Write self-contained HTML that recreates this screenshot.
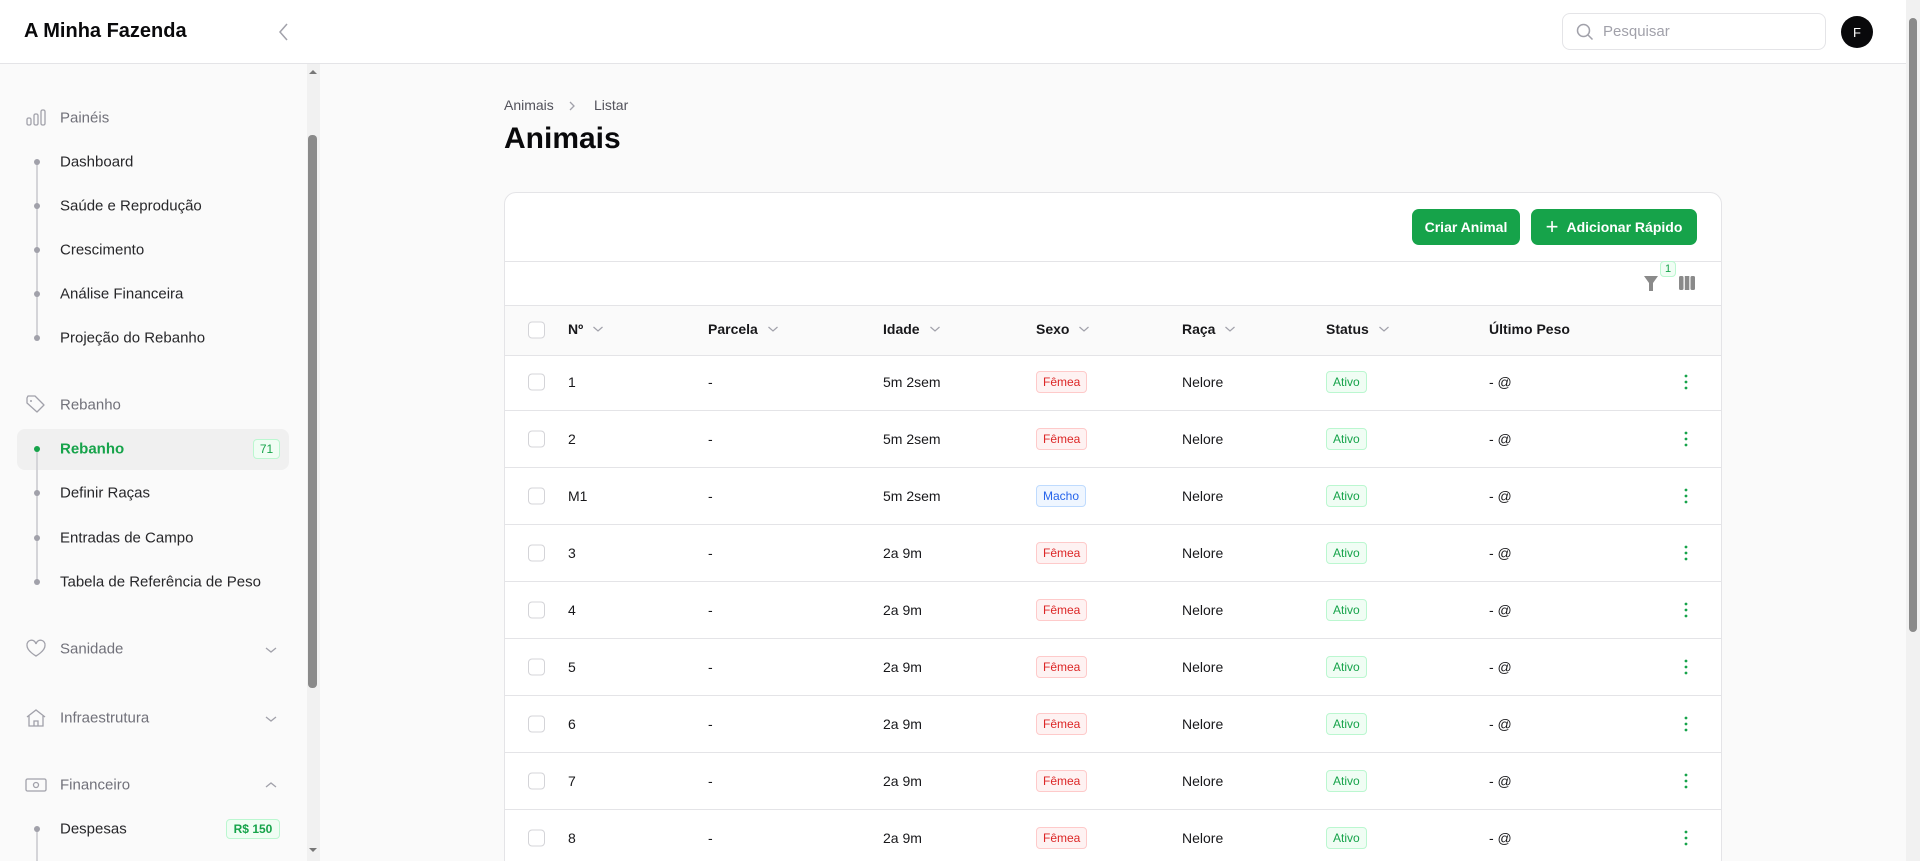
<!DOCTYPE html>
<html style="overflow:hidden;height:861px"><head><meta charset="utf-8"><style>
*{box-sizing:border-box;margin:0;padding:0}
html,body{overflow:hidden}
body{width:1920px;height:861px;background:#fafafa;font-family:"Liberation Sans",sans-serif;color:#18181b;position:relative}
.a{position:absolute}
.hdr{left:0;top:0;width:1906px;height:64px;background:#fff;border-bottom:1px solid #e4e4e7}
.side{left:0;top:64px;width:320px;height:797px;background:#fafafa}
.sec{position:absolute;left:60px;font-size:15px;color:#71717a;transform:translateY(-50%)}
.it{position:absolute;left:60px;font-size:15px;color:#27272a;transform:translateY(-50%)}
.dot{position:absolute;left:34px;width:6px;height:6px;border-radius:50%;background:#a1a1aa;transform:translateY(-50%)}
.vl{position:absolute;left:36px;width:1.5px;background:#d4d4d8}
.ico{position:absolute;left:25px;transform:translateY(-50%)}
.chev{position:absolute;left:264px;transform:translateY(-50%)}
.card{left:504px;top:192px;width:1218px;height:680px;background:#fff;border:1px solid #e4e4e7;border-radius:12px;overflow:hidden}
.btn{position:absolute;top:16px;height:36px;background:#16a34a;color:#fff;font-size:14px;font-weight:bold;border-radius:7px;display:flex;align-items:center;justify-content:center}
.th{position:absolute;font-size:14px;font-weight:bold;color:#18181b;top:329px;transform:translateY(-50%);display:flex;align-items:center;gap:9px}
.td{position:absolute;font-size:14px;color:#18181b;transform:translateY(-50%)}
.cb{position:absolute;left:528px;width:17px;height:17px;border:1px solid #d4d4d8;border-radius:4px;background:#fff;transform:translateY(-50%)}
.bd{position:absolute;font-size:12px;padding:3px 6px;border-radius:4px;border:1px solid;transform:translateY(-50%)}
.f{background:#fef2f2;border-color:#fecaca;color:#dc2626}
.m{background:#eff6ff;border-color:#bfdbfe;color:#2563eb}
.at{background:#f0fdf4;border-color:#bbf7d0;color:#16a34a}
.rl{position:absolute;left:504px;width:1218px;height:1px;background:#e4e4e7}
</style></head><body>
<div class="a hdr"></div>
<div class="a" style="left:24px;top:20px;font-size:20px;font-weight:bold;color:#09090b">A Minha Fazenda</div>
<svg class="a" style="left:276px;top:22px" width="16" height="20" viewBox="0 0 16 20"><path d="M11 2L4 10l7 8" stroke="#a1a1aa" stroke-width="1.5" fill="none"/></svg>
<div class="a" style="left:1562px;top:13px;width:264px;height:37px;border:1px solid #e4e4e7;border-radius:8px;background:#fff"></div>
<svg class="a" style="left:1575px;top:22px" width="20" height="20" viewBox="0 0 20 20"><circle cx="8.5" cy="8.5" r="6" stroke="#a1a1aa" stroke-width="1.5" fill="none"/><path d="M13 13l4.5 4.5" stroke="#a1a1aa" stroke-width="1.5"/></svg>
<div class="a" style="left:1603px;top:23px;font-size:15px;color:#a1a1aa">Pesquisar</div>
<div class="a" style="left:1841px;top:16px;width:32px;height:32px;border-radius:50%;background:#09090b;color:#fff;font-size:13px;display:flex;align-items:center;justify-content:center">F</div>
<div class="a" style="left:1906px;top:0;width:14px;height:861px;background:#f1f1f1"></div>
<div class="a" style="left:1909px;top:18px;width:8px;height:614px;border-radius:4px;background:#8a8a8a"></div>

<div class="a side"></div>
<div class="a" style="left:307px;top:64px;width:13px;height:797px;background:#f1f1f1"></div>
<div class="a" style="left:308px;top:135px;width:9px;height:553px;border-radius:4px;background:#8a8a8a"></div>
<svg class="a" style="left:308px;top:68px" width="10" height="8"><path d="M1 6h8L5 2z" fill="#777"/></svg>
<svg class="a" style="left:308px;top:846px" width="10" height="8"><path d="M1 2h8L5 6z" fill="#777"/></svg>

<svg class="ico" style="top:118px" width="22" height="20" viewBox="0 0 22 20"><g stroke="#a1a1aa" stroke-width="1.3" fill="none"><rect x="2" y="10" width="4" height="7" rx="1.5"/><rect x="9" y="6" width="4" height="11" rx="1.5"/><rect x="16" y="2" width="4" height="15" rx="1.5"/></g></svg>
<div class="sec" style="top:118px">Painéis</div>
<div class="vl" style="top:162px;height:176px"></div>
<div class="dot" style="top:162px"></div><div class="it" style="top:162px">Dashboard</div>
<div class="dot" style="top:206px"></div><div class="it" style="top:206px">Saúde e Reprodução</div>
<div class="dot" style="top:250px"></div><div class="it" style="top:250px">Crescimento</div>
<div class="dot" style="top:294px"></div><div class="it" style="top:294px">Análise Financeira</div>
<div class="dot" style="top:338px"></div><div class="it" style="top:338px">Projeção do Rebanho</div>

<svg class="ico" style="top:405px" width="22" height="20" viewBox="0 0 22 20"><path d="M2 3v5l10 9 7-7-9-9H3z" stroke="#a1a1aa" stroke-width="1.3" fill="none" stroke-linejoin="round"/><circle cx="6" cy="6" r="1" fill="#a1a1aa"/></svg>
<div class="sec" style="top:405px">Rebanho</div>
<div class="a" style="left:17px;top:429px;width:272px;height:41px;background:#f0f0f0;border-radius:8px"></div>
<div class="vl" style="top:449px;height:133px"></div>
<div class="dot" style="top:449px;background:#16a34a"></div><div class="it" style="top:449px;color:#16a34a;font-weight:bold">Rebanho</div>
<div class="a" style="left:253px;top:439px;width:27px;height:20px;border:1px solid #bbf7d0;background:#f0fdf4;border-radius:4px;color:#16a34a;font-size:12px;display:flex;align-items:center;justify-content:center">71</div>
<div class="dot" style="top:493px"></div><div class="it" style="top:493px">Definir Raças</div>
<div class="dot" style="top:538px"></div><div class="it" style="top:538px">Entradas de Campo</div>
<div class="dot" style="top:582px"></div><div class="it" style="top:582px">Tabela de Referência de Peso</div>

<svg class="ico" style="top:649px" width="22" height="20" viewBox="0 0 22 20"><path d="M11 17S2 12 2 6.5A4.5 4.5 0 0 1 11 5a4.5 4.5 0 0 1 9 1.5C20 12 11 17 11 17z" stroke="#a1a1aa" stroke-width="1.3" fill="none"/></svg>
<div class="sec" style="top:649px">Sanidade</div>
<svg class="chev" style="top:650px" width="14" height="10"><path d="M2 3l5 4 5-4" stroke="#a1a1aa" stroke-width="1.3" fill="none"/></svg>
<svg class="ico" style="top:718px" width="22" height="20" viewBox="0 0 22 20"><path d="M2 9l9-7 9 7M4 8v10h14V8M9 18v-5h4v5" stroke="#a1a1aa" stroke-width="1.3" fill="none"/></svg>
<div class="sec" style="top:718px">Infraestrutura</div>
<svg class="chev" style="top:719px" width="14" height="10"><path d="M2 3l5 4 5-4" stroke="#a1a1aa" stroke-width="1.3" fill="none"/></svg>
<svg class="ico" style="top:785px" width="22" height="20" viewBox="0 0 22 20"><rect x="1" y="4" width="20" height="12" rx="1.5" stroke="#a1a1aa" stroke-width="1.3" fill="none"/><circle cx="11" cy="10" r="2.5" stroke="#a1a1aa" stroke-width="1.3" fill="none"/></svg>
<div class="sec" style="top:785px">Financeiro</div>
<svg class="chev" style="top:785px" width="14" height="10"><path d="M2 7l5-4 5 4" stroke="#a1a1aa" stroke-width="1.3" fill="none"/></svg>
<div class="vl" style="top:829px;height:40px"></div>
<div class="dot" style="top:829px"></div><div class="it" style="top:829px">Despesas</div>
<div class="a" style="left:226px;top:819px;width:54px;height:20px;border:1px solid #bbf7d0;background:#f0fdf4;border-radius:4px;color:#16a34a;font-size:12px;font-weight:bold;display:flex;align-items:center;justify-content:center">R$ 150</div>

<div class="a" style="left:504px;top:97px;font-size:14px;color:#52525b">Animais</div>
<svg class="a" style="left:567px;top:100px" width="10" height="12"><path d="M3 2l4 4-4 4" stroke="#a1a1aa" stroke-width="1.3" fill="none"/></svg>
<div class="a" style="left:594px;top:97px;font-size:14px;color:#52525b">Listar</div>
<div class="a" style="left:504px;top:122px;font-size:30px;font-weight:bold;color:#09090b">Animais</div>

<div class="a card">
<div class="btn" style="left:907px;width:108px">Criar Animal</div>
<div class="btn" style="left:1026px;width:166px"><span style="font-size:22px;font-weight:normal;margin-right:8px;line-height:1">+</span>Adicionar Rápido</div>
<div class="a" style="left:0;top:68px;width:100%;height:1px;background:#e4e4e7"></div>
<div class="a" style="left:0;top:112px;width:100%;height:51px;background:#fafafa;border-top:1px solid #e4e4e7;border-bottom:1px solid #e4e4e7"></div>
</div>
<svg class="a" style="left:1643px;top:274px" width="16" height="18"><path d="M1 2h14l-5 7v8H6V9z" fill="#8a8a8a"/></svg>
<div class="a" style="left:1660px;top:261px;width:16px;height:16px;border-radius:4px;background:#f0fdf4;border:1px solid #bbf7d0;color:#16a34a;font-size:11px;display:flex;align-items:center;justify-content:center">1</div>
<svg class="a" style="left:1678px;top:275px" width="18" height="16"><rect x="1" y="1" width="4.5" height="14" rx="1.5" fill="#8a8a8a"/><rect x="6.8" y="1" width="4.5" height="14" fill="#8a8a8a"/><rect x="12.5" y="1" width="4.5" height="14" rx="1.5" fill="#8a8a8a"/></svg>

<div class="cb" style="top:330px"></div>
<div id="hd"></div>
<div id="rows"></div>
<script>
var cv='<svg width="12" height="8"><path d="M1.5 2l4.5 4 4.5-4" stroke="#a1a1aa" stroke-width="1.2" fill="none"/></svg>';
var hs=[["Nº",568,1],["Parcela",708,1],["Idade",883,1],["Sexo",1036,1],["Raça",1182,1],["Status",1326,1],["Último Peso",1489,0]];
var hh="";hs.forEach(function(c){hh+='<div class="th" style="left:'+c[1]+'px">'+c[0]+(c[2]?cv:'')+'</div>';});
document.getElementById("hd").innerHTML=hh;
var d=[["1","5m 2sem","f"],["2","5m 2sem","f"],["M1","5m 2sem","m"],["3","2a 9m","f"],["4","2a 9m","f"],["5","2a 9m","f"],["6","2a 9m","f"],["7","2a 9m","f"],["8","2a 9m","f"]];
var h="";
d.forEach(function(r,i){var y=382+i*57;
h+='<div class="cb" style="top:'+y+'px"></div>';
h+='<div class="td" style="left:568px;top:'+y+'px">'+r[0]+'</div>';
h+='<div class="td" style="left:708px;top:'+y+'px">-</div>';
h+='<div class="td" style="left:883px;top:'+y+'px">'+r[1]+'</div>';
h+='<div class="bd '+r[2]+'" style="left:1036px;top:'+y+'px">'+(r[2]=="f"?"Fêmea":"Macho")+'</div>';
h+='<div class="td" style="left:1182px;top:'+y+'px">Nelore</div>';
h+='<div class="bd at" style="left:1326px;top:'+y+'px">Ativo</div>';
h+='<div class="td" style="left:1489px;top:'+y+'px">- @</div>';
h+='<svg class="a" style="left:1683px;top:'+(y-9)+'px" width="6" height="18"><circle cx="3" cy="3" r="1.4" fill="#16a34a"/><circle cx="3" cy="9" r="1.4" fill="#16a34a"/><circle cx="3" cy="15" r="1.4" fill="#16a34a"/></svg>';
if(i<8)h+='<div class="rl" style="top:'+(y+28)+'px"></div>';});
document.getElementById("rows").innerHTML=h;
</script>
</body></html>
